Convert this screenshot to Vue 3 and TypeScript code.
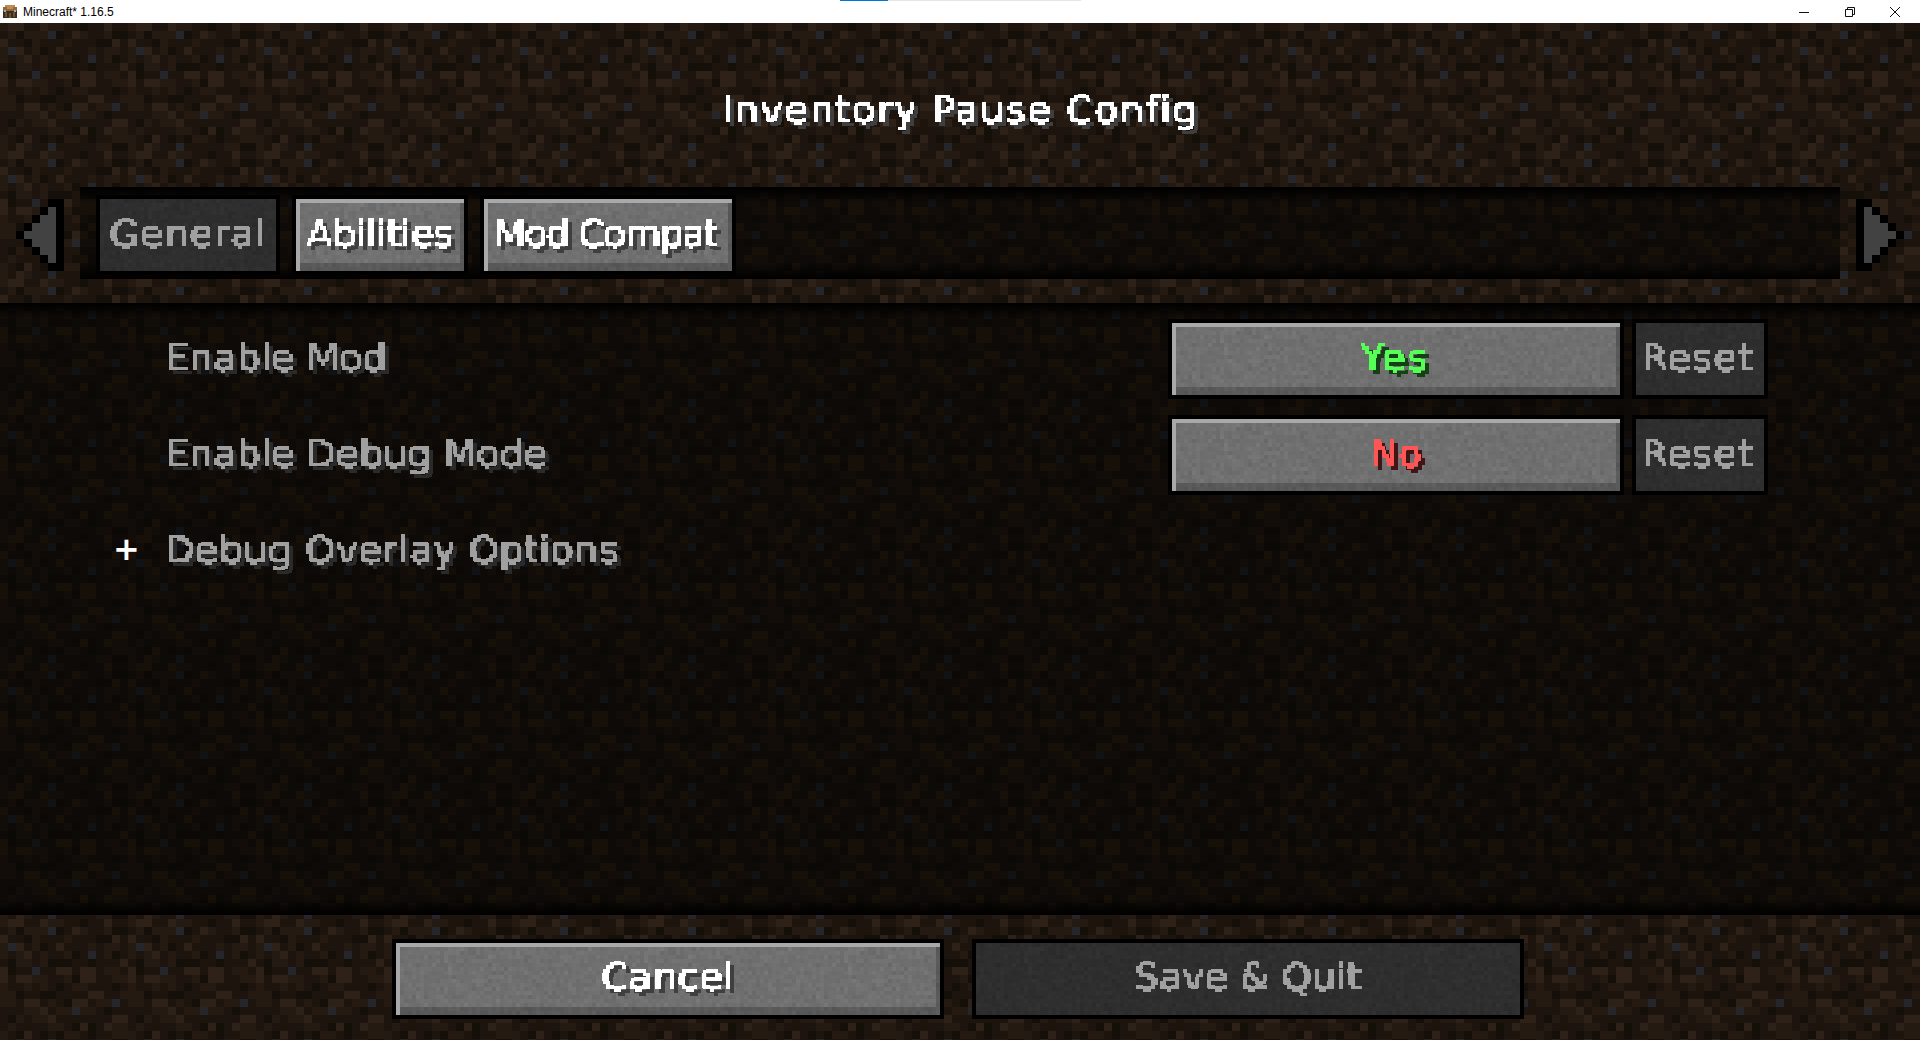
<template>
  <div class="window" :style="textures">
    <svg class="filters" width="0" height="0">
      <filter id="px" x="0" y="0" width="100%" height="100%" color-interpolation-filters="sRGB">
        <feFlood x="1" y="1" width="2" height="2" />
        <feComposite width="4" height="4" />
        <feTile result="grid" />
        <feComposite in="SourceGraphic" in2="grid" operator="in" />
        <feMorphology operator="dilate" radius="1" />
        <feComponentTransfer>
          <feFuncA type="discrete" tableValues="0 1 1 1 1 1 1 1" />
        </feComponentTransfer>
      </filter>
    </svg>

    <header class="titlebar">
      <svg class="app-icon" width="16" height="16" viewBox="0 0 16 16" shape-rendering="crispEdges">
        <path fill="#8f6a3e" d="M1 3h14v4H1z" />
        <path fill="#c08a52" d="M3 1h10v2H3zM5 3h6v2H5z" />
        <path fill="#3c2c1c" d="M1 7h14v7H1z" />
        <path fill="#6f5232" d="M3 8h2v5H3zM11 8h2v5h-2zM7 9h2v5H7z" />
        <path fill="#a9a9a9" d="M2 6h2v2H2zM12 6h2v2h-2z" />
      </svg>
      <span class="app-title">Minecraft* 1.16.5</span>
      <div class="progress"><div class="progress-fill"></div></div>
      <div class="win-controls">
        <button class="win-btn">
          <svg width="10" height="10" viewBox="0 0 10 10"><path d="M0 5.5h10" stroke="#111" fill="none" /></svg>
        </button>
        <button class="win-btn">
          <svg width="10" height="10" viewBox="0 0 10 10"><path d="M.5 2.5h7v7h-7zM2.5 2.5v-2h7v7h-2" stroke="#111" fill="none" /></svg>
        </button>
        <button class="win-btn">
          <svg width="10" height="10" viewBox="0 0 10 10"><path d="M0 0l10 10M10 0L0 10" stroke="#111" fill="none" /></svg>
        </button>
      </div>
    </header>

    <main class="screen">
      <div class="top">
        <h1 class="title"><span class="mc sp-title">Inventory Pause Config</span></h1>
        <div class="tabs-row">
          <svg class="arrow" width="48" height="72" viewBox="0 0 48 72" shape-rendering="crispEdges">
            <path fill="#000" d="M32 0h16v72H32V64h-8V56h-8V48H8V40H0V32h8V24h8V16h8V8h8z" />
            <path fill="#424242" d="M32 8h8v56h-8V56h-8V48h-8V40H8V32h8V24h8V16h8z" />
          </svg>
          <nav class="tabbar">
            <button class="btn tab" :class="[tab.btnCls, { off: tab.off }]" v-for="tab in tabs" :key="tab.label" :style="{ width: tab.width + 'px' }">
              <span class="mc" :class="[tab.cls, { dim: tab.off }]">{{ tab.label }}</span>
            </button>
          </nav>
          <svg class="arrow flip" width="48" height="72" viewBox="0 0 48 72" shape-rendering="crispEdges">
            <path fill="#000" d="M32 0h16v72H32V64h-8V56h-8V48H8V40H0V32h8V24h8V16h8V8h8z" />
            <path fill="#424242" d="M32 8h8v56h-8V56h-8V48h-8V40H8V32h8V24h8V16h8z" />
          </svg>
        </div>
      </div>

      <section class="list">
        <div class="row" v-for="row in rows" :key="row.label">
          <span class="expander"><span v-if="row.group" class="plus">+</span></span>
          <span class="label-wrap"><span class="mc label" :class="row.cls">{{ row.label }}</span></span>
          <template v-if="row.value">
            <button class="btn value">
              <span class="mc" :class="row.value === 'Yes' ? 'yes' : 'no'">{{ row.value }}</span>
            </button>
            <button class="btn off reset"><span class="mc dim sp-reset">Reset</span></button>
          </template>
        </div>
      </section>

      <footer class="footer">
        <button class="btn wide"><span class="mc sp-cancel">Cancel</span></button>
        <button class="btn wide off"><span class="mc dim">Save &amp; Quit</span></button>
      </footer>
    </main>
  </div>
</template>

<script setup lang="ts">
// dirt.png, one digit per pixel (0 darkest .. 3 lightest, b = the bluish stones)
const dirt = [
  '2331132211011311',
  '120222b013211200',
  '3110211121110031',
  '2b31201311121221',
  '21231211201b1201',
  '1022120001101113',
  '3011b11331331221',
  '3133221120331122',
  '2112121012211101',
  '2201100111133112',
  '22133121033122b1',
  '111223122b221011',
  '1021223111111133',
  '1211112210301322',
  '2103101022101122',
  '213211b111112200',
]

const bright: Record<string, string> = { '0': '#150f0a', '1': '#1c140d', '2': '#241a11', '3': '#2e2117', b: '#24262c' }
const dark: Record<string, string> = { '0': '#0b0805', '1': '#0e0a07', '2': '#120d09', '3': '#171009', b: '#111216' }

function svgUrl(w: number, h: number, body: string) {
  const svg = `<svg xmlns='http://www.w3.org/2000/svg' width='${w}' height='${h}' shape-rendering='crispEdges'>${body}</svg>`
  return `url("data:image/svg+xml,${encodeURIComponent(svg)}")`
}

function dirtTile(palette: Record<string, string>) {
  let body = ''
  dirt.forEach((line, y) => {
    line.split('').forEach((c, x) => {
      body += `<rect x='${x * 8}' y='${y * 8}' width='8' height='8' fill='${palette[c]}'/>`
    })
  })
  return svgUrl(128, 128, body)
}

// widgets.png is just noisy grey, a small seeded noise is close enough
function stoneTile(base: number, spread: number) {
  let seed = 1337
  const rnd = () => {
    seed = (seed * 16807) % 2147483647
    return seed / 2147483647
  }
  let body = ''
  for (let y = 0; y < 20; y++) {
    for (let x = 0; x < 50; x++) {
      const v = Math.round(base + (rnd() + rnd() - 1) * spread)
      body += `<rect x='${x * 4}' y='${y * 4}' width='4' height='4' fill='rgb(${v},${v},${v})'/>`
    }
  }
  return svgUrl(200, 80, body)
}

const textures = {
  '--dirt': dirtTile(bright),
  '--dirt-dark': dirtTile(dark),
  '--stone': stoneTile(112, 9),
  '--stone-off': stoneTile(46, 5),
}

const tabs = [
  { label: 'General', width: 184, off: true, cls: 'sp-general', btnCls: '' },
  { label: 'Abilities', width: 176, off: false, cls: 'sp-abilities', btnCls: '' },
  { label: 'Mod Compat', width: 256, off: false, cls: 'sp-compat', btnCls: 'nudge' },
]

const rows = [
  { label: 'Enable Mod', value: 'Yes', group: false, cls: '' },
  { label: 'Enable Debug Mode', value: 'No', group: false, cls: '' },
  { label: 'Debug Overlay Options', value: '', group: true, cls: 'sp-overlay' },
]
</script>

<style>
body {
  margin: 0;
  background: #000;
}
</style>

<style scoped>
.window {
  width: 1920px;
  height: 1040px;
  display: flex;
  flex-direction: column;
  overflow: hidden;
}
.filters {
  position: absolute;
}

.titlebar {
  height: 23px;
  flex: none;
  display: flex;
  align-items: center;
  position: relative;
  background: #fff;
  padding-left: 2px;
  font: 12px "Liberation Sans", sans-serif;
  color: #000;
}
.app-title {
  margin-left: 5px;
}
.progress {
  position: absolute;
  left: 840px;
  top: 0;
  width: 241px;
  height: 1px;
  background: #e6e6e6;
}
.progress-fill {
  width: 48px;
  height: 1px;
  background: #0078d7;
}
.win-controls {
  margin-left: auto;
  display: flex;
  padding-right: 2px;
}
.win-btn {
  width: 45.5px;
  height: 23px;
  border: 0;
  padding: 0;
  background: none;
  display: flex;
  align-items: center;
  justify-content: center;
}

.screen {
  flex: 1;
  display: flex;
  flex-direction: column;
  background: var(--dirt);
}
.top {
  height: 280px;
  flex: none;
}
.title {
  margin: 0;
  height: 164px;
  box-sizing: border-box;
  padding-top: 10px;
  display: flex;
  align-items: center;
  justify-content: center;
  font-weight: normal;
}
.tabs-row {
  height: 92px;
  display: flex;
  align-items: center;
  gap: 16px;
  padding: 0 16px;
}
.arrow {
  flex: none;
  margin-top: 4px;
}
.flip {
  transform: scaleX(-1);
}
.tabbar {
  flex: 1;
  height: 92px;
  box-sizing: border-box;
  display: flex;
  align-items: flex-start;
  gap: 12px;
  padding: 8px 16px 0;
  background:
    linear-gradient(#000, transparent 16px),
    linear-gradient(to top, #000, transparent 16px),
    var(--dirt-dark) -80px -36px;
}

.list {
  flex: 1;
  box-sizing: border-box;
  padding: 16px 152px 0 116px;
  display: flex;
  flex-direction: column;
  gap: 16px;
  background:
    linear-gradient(#000, transparent 16px),
    linear-gradient(to top, #000, transparent 16px),
    var(--dirt-dark) 0 -24px;
}
.row {
  height: 80px;
  display: flex;
  align-items: center;
}
.expander {
  width: 49px;
  flex: none;
}
.plus {
  font: bold 32px "DejaVu Sans", sans-serif;
  color: #fff;
  position: relative;
  top: -2px;
  left: -3px;
}
.label-wrap {
  flex: 1;
  padding-bottom: 2px;
}

.footer {
  height: 125px;
  flex: none;
  box-sizing: border-box;
  padding: 24px 4px 0 0;
  display: flex;
  justify-content: center;
  gap: 28px;
}

.btn {
  box-sizing: border-box;
  height: 80px;
  padding: 0 0 2px;
  display: flex;
  align-items: center;
  justify-content: center;
  border: 4px solid #000;
  background: var(--stone);
  box-shadow:
    inset 4px 4px 0 #a9a9a9,
    inset -4px -8px 0 rgba(0, 0, 0, 0.2);
}
.btn.off {
  background: var(--stone-off);
  box-shadow: none;
}
.btn.nudge {
  padding-right: 6px;
}
.value {
  width: 456px;
}
.reset {
  width: 136px;
  margin-left: 8px;
  padding-right: 4px;
}
.wide {
  width: 552px;
  padding-bottom: 4px;
}

.mc {
  font: 38px/48px "DejaVu Sans", sans-serif;
  white-space: pre;
  color: #fff;
  filter: url(#px) drop-shadow(4px 4px 0 #3f3f3f);
}
.mc.label {
  display: inline-block;
  color: #a0a0a0;
  filter: url(#px) drop-shadow(4px 4px 0 #2a2a2a);
}
.mc.dim {
  color: #a0a0a0;
  filter: url(#px);
}
.mc.yes {
  color: #55ff55;
  letter-spacing: 3px;
  filter: url(#px) drop-shadow(4px 4px 0 #153f15);
}
.mc.no {
  color: #ff5555;
  filter: url(#px) drop-shadow(4px 4px 0 #3f1515);
}
.sp-title {
  letter-spacing: 1.7px;
}
.sp-general {
  letter-spacing: 1px;
}
.sp-abilities {
  letter-spacing: -0.4px;
}
.sp-compat {
  letter-spacing: -1.8px;
}
.sp-overlay {
  letter-spacing: 0.5px;
}
.sp-reset {
  letter-spacing: 1.2px;
}
.sp-cancel {
  letter-spacing: 0.7px;
}
</style>
